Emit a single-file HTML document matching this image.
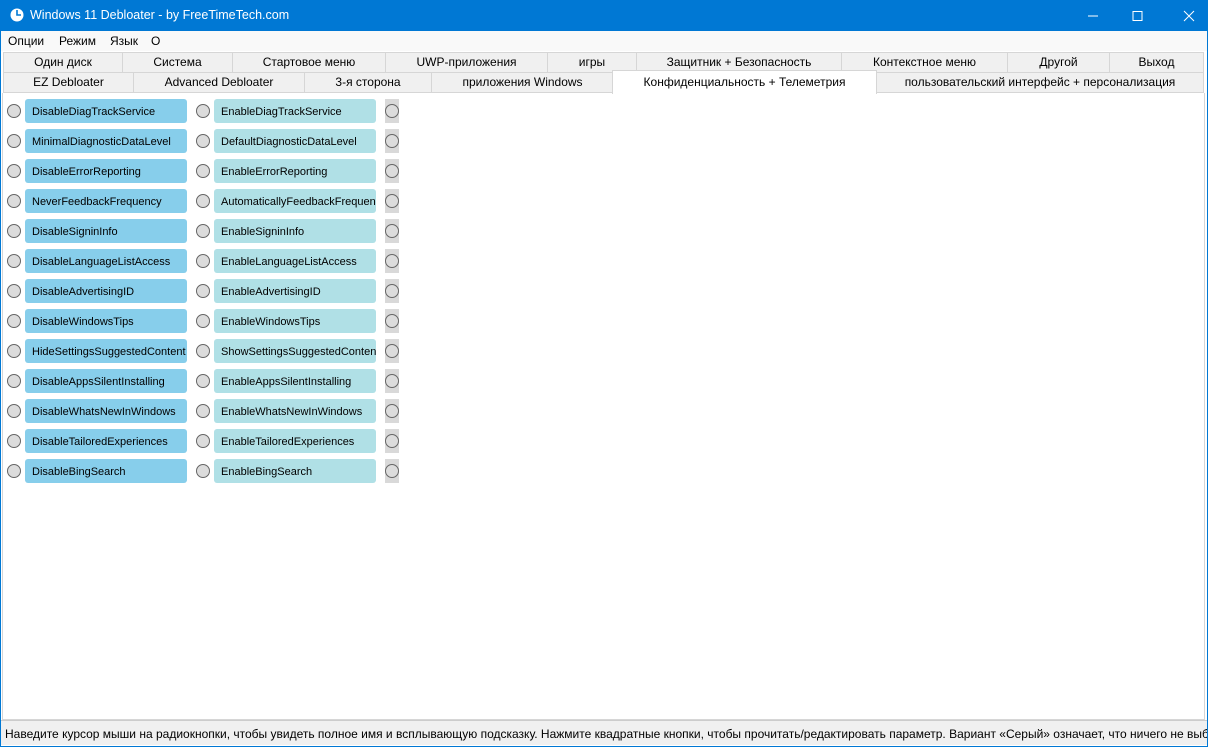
<!DOCTYPE html><html><head><meta charset="utf-8"><style>
*{margin:0;padding:0;box-sizing:border-box}
body{width:1208px;height:747px;overflow:hidden;background:#0078d4;font-family:"Liberation Sans",sans-serif;font-size:12px;color:#000;position:relative}
.title{position:absolute;left:0;top:0;width:1208px;height:31px;color:#fff;font-size:12.5px}
.title span{position:absolute;left:30px;top:8px}
.win{position:absolute;left:1px;top:31px;width:1206px;height:715px;background:#fff}
.menu{position:absolute;left:0;top:0;height:20px;width:100%;background:#f9f9f9}
.menu span{position:absolute;top:3px}
.tab{position:absolute;height:21px;background:#f0f0f0;border:1px solid #d6d6d6;text-align:center;line-height:19px;font-size:12px}
.r{position:absolute;width:14px;height:14px;border-radius:50%;border:1px solid #666;background:#dcdcdc}
.b{position:absolute;height:24px;border-radius:3px;padding-left:7px;line-height:26px;font-size:11px;overflow:hidden;white-space:nowrap;width:162px}
.g{position:absolute;width:14px;height:24px;background:#d9d9d9}
.status{position:absolute;left:0;top:689px;width:100%;height:25px;background:#f0f0f0;border-top:1px solid #ccc;padding:6px 4px;font-size:12px;white-space:nowrap;overflow:hidden}
</style></head><body>
<div class="title"><svg style="position:absolute;left:10px;top:8px" width="14" height="14"><circle cx="7" cy="7" r="6.5" fill="#fff"/><path d="M7 2v5h4" stroke="#0078d4" stroke-width="1.6" fill="none"/></svg><span>Windows 11 Debloater - by FreeTimeTech.com</span>
<svg style="position:absolute;left:1088px;top:10px" width="110" height="12"><path d="M0 6h10" stroke="#fff"/><path d="M45 1.5h9v9h-9z" stroke="#fff" fill="none"/><path d="M96 1l10 10M106 1l-10 10" stroke="#fff"/></svg></div>
<div class="win">
<div class="menu"><span style="left:7px">Опции</span><span style="left:58px">Режим</span><span style="left:109px">Язык</span><span style="left:150px">О</span></div>
<div class="tab" style="left:2px;top:21px;width:120px">Один диск</div>
<div class="tab" style="left:121px;top:21px;width:111px">Система</div>
<div class="tab" style="left:231px;top:21px;width:154px">Стартовое меню</div>
<div class="tab" style="left:384px;top:21px;width:163px">UWP-приложения</div>
<div class="tab" style="left:546px;top:21px;width:90px">игры</div>
<div class="tab" style="left:635px;top:21px;width:206px">Защитник + Безопасность</div>
<div class="tab" style="left:840px;top:21px;width:167px">Контекстное меню</div>
<div class="tab" style="left:1006px;top:21px;width:103px">Другой</div>
<div class="tab" style="left:1108px;top:21px;width:95px">Выход</div>
<div class="tab" style="left:2px;top:41px;width:131px">EZ Debloater</div>
<div class="tab" style="left:132px;top:41px;width:172px">Advanced Debloater</div>
<div class="tab" style="left:303px;top:41px;width:128px">3-я сторона</div>
<div class="tab" style="left:430px;top:41px;width:183px">приложения Windows</div>
<div class="tab" style="left:875px;top:41px;width:328px">пользовательский интерфейс + персонализация</div>
<div class="tab" style="left:611px;top:39px;width:265px;height:24px;background:#fff;border-bottom:none;line-height:22px">Конфиденциальность + Телеметрия</div>
<div style="position:absolute;left:1px;top:62px;width:1203px;height:627px;border:1px solid #d6d6d6;border-top:none"></div>
<div id="rows"></div>
<div class="status">Наведите курсор мыши на радиокнопки, чтобы увидеть полное имя и всплывающую подсказку. Нажмите квадратные кнопки, чтобы прочитать/редактировать параметр. Вариант «Серый» означает, что ничего не выбрано</div>
</div>
<script>
var a=[["DisableDiagTrackService","EnableDiagTrackService"],["MinimalDiagnosticDataLevel","DefaultDiagnosticDataLevel"],["DisableErrorReporting","EnableErrorReporting"],["NeverFeedbackFrequency","AutomaticallyFeedbackFrequency"],["DisableSigninInfo","EnableSigninInfo"],["DisableLanguageListAccess","EnableLanguageListAccess"],["DisableAdvertisingID","EnableAdvertisingID"],["DisableWindowsTips","EnableWindowsTips"],["HideSettingsSuggestedContent","ShowSettingsSuggestedContent"],["DisableAppsSilentInstalling","EnableAppsSilentInstalling"],["DisableWhatsNewInWindows","EnableWhatsNewInWindows"],["DisableTailoredExperiences","EnableTailoredExperiences"],["DisableBingSearch","EnableBingSearch"]];
var h="";a.forEach(function(p,i){var y=68+i*30;
h+='<div class="r" style="left:6px;top:'+(y+5)+'px"></div><div class="b" style="left:24px;top:'+y+'px;background:#87ceeb">'+p[0]+'</div>';
h+='<div class="r" style="left:195px;top:'+(y+5)+'px"></div><div class="b" style="left:213px;top:'+y+'px;background:#b0e0e6">'+p[1]+'</div>';
h+='<div class="g" style="left:384px;top:'+y+'px"></div><div class="r" style="left:384px;top:'+(y+5)+'px"></div>';});
document.getElementById("rows").innerHTML=h;
</script>
</body></html>
